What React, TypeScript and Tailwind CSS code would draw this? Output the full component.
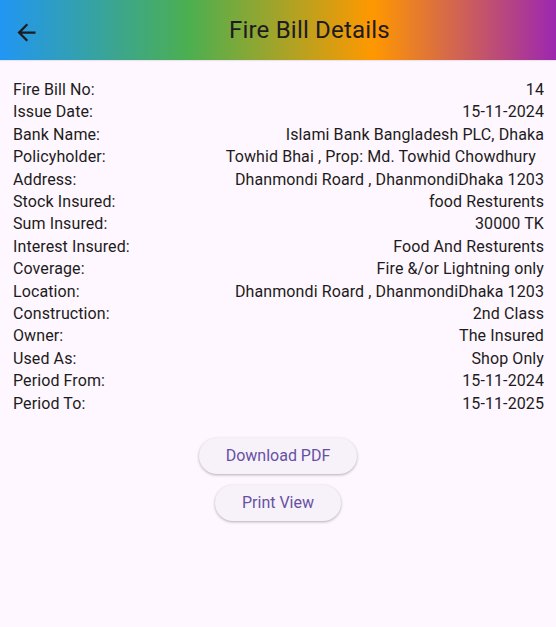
const rows: [string, string][] = [
  ["Fire Bill No:", "14"],
  ["Issue Date:", "15-11-2024"],
  ["Bank Name:", "Islami Bank Bangladesh PLC, Dhaka"],
  ["Policyholder:", "Towhid Bhai , Prop: Md. Towhid Chowdhury\u00a0\u00a0"],
  ["Address:", "Dhanmondi Roard , DhanmondiDhaka 1203"],
  ["Stock Insured:", "food Resturents"],
  ["Sum Insured:", "30000 TK"],
  ["Interest Insured:", "Food And Resturents"],
  ["Coverage:", "Fire &/or Lightning only"],
  ["Location:", "Dhanmondi Roard , DhanmondiDhaka 1203"],
  ["Construction:", "2nd Class"],
  ["Owner:", "The Insured"],
  ["Used As:", "Shop Only"],
  ["Period From:", "15-11-2024"],
  ["Period To:", "15-11-2025"],
];

function BackArrow() {
  return (
    <svg width="27" height="27" viewBox="0 0 24 24" fill="#1d1b20">
      <path d="M20 11H7.83l5.59-5.59L12 4l-8 8 8 8 1.41-1.41L7.83 13H20v-2z" />
    </svg>
  );
}

export default function App() {
  return (
    <div className="min-h-[627px] bg-[#fef7ff] font-['Roboto',sans-serif] text-[#1d1b20]">
      <header className="flex h-[60px] items-center bg-[linear-gradient(to_right,#2196f3,#4caf50_34%,#ff9800_67%,#9c27b0)] pl-[13px] shadow-[0_1px_1px_rgba(0,0,0,0.08)]">
        <button type="button" className="mt-[4px] flex h-[27px] w-[27px] items-center justify-center">
          <BackArrow />
        </button>
        <h1 className="ml-[189px] text-[24px] font-normal leading-7 tracking-[0.2px]">Fire Bill Details</h1>
      </header>

      <div className="pl-[13px] pr-[12px] pt-[19px]">
        {rows.map(([label, value]) => (
          <div key={label} className="flex justify-between gap-4 text-[16px] leading-[22.4px] tracking-[0.1px]">
            <span>{label}</span>
            <span className="whitespace-pre text-right">{value}</span>
          </div>
        ))}
      </div>

      <div className="mt-[23px] flex flex-col items-center gap-[11px]">
        <button
          type="button"
          className="h-9 rounded-full bg-[#f7f2fa] px-[27px] text-[16px] text-[#6750a4] shadow-[0_1px_3px_rgba(0,0,0,0.3)]"
        >
          Download PDF
        </button>
        <button
          type="button"
          className="h-9 rounded-full bg-[#f7f2fa] px-[27px] text-[16px] text-[#6750a4] shadow-[0_1px_3px_rgba(0,0,0,0.3)]"
        >
          Print View
        </button>
      </div>
    </div>
  );
}
